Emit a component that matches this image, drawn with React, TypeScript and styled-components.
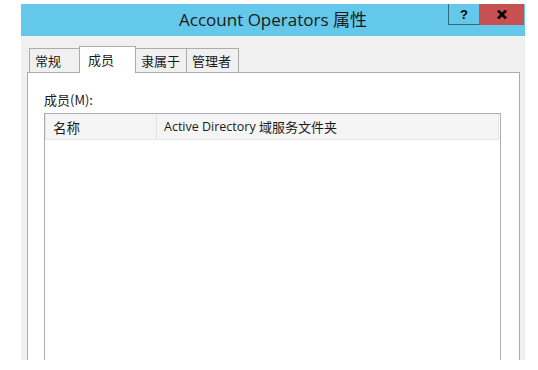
import React from "react";
import styled, { createGlobalStyle } from "styled-components";

const GlobalStyle = createGlobalStyle`
  html, body {
    margin: 0;
    padding: 0;
    background: #fff;
  }
  body {
    font-family: "Noto Sans", "Noto Sans CJK SC", sans-serif;
  }
`;

const Page = styled.div`
  width: 538px;
  height: 370px;
  padding: 4px 0 0 21px;
  box-sizing: border-box;
  overflow: hidden;
`;

const Window = styled.div`
  width: 504px;
  height: 356px;
  background: #f0f0f0;
  display: flex;
  flex-direction: column;
`;

const TitleBar = styled.div`
  position: relative;
  height: 32px;
  background: #63c8e9;
  display: flex;
  align-items: center;
  justify-content: center;
`;

const Title = styled.div`
  font-family: "Open Sans", "Noto Sans CJK SC", sans-serif;
  font-size: 17px;
  color: #1a1a1a;
  margin-top: -4px;
`;

const Controls = styled.div`
  position: absolute;
  top: 0;
  right: 1px;
  display: flex;
`;

const CtrlButton = styled.div<{ $close?: boolean }>`
  width: ${(p) => (p.$close ? 45 : 31)}px;
  height: 21px;
  box-sizing: border-box;
  display: flex;
  align-items: center;
  justify-content: center;
  background: ${(p) => (p.$close ? "#c75050" : "#63c8e9")};
  border-left: ${(p) => (p.$close ? "none" : "1px solid #2f6b80")};
  border-bottom: ${(p) => (p.$close ? "none" : "1px solid #2f6b80")};
  font-family: "Liberation Sans", sans-serif;
  font-weight: bold;
  font-size: 13px;
  color: #000;
`;

const CloseGlyph = styled.svg`
  width: 10px;
  height: 9px;
  stroke: #000;
  stroke-width: 2.6;
`;

const Body = styled.div`
  flex: 1;
  display: flex;
  flex-direction: column;
  padding: 10px 5px 0 6px;
  min-height: 0;
`;

const TabStrip = styled.div`
  display: flex;
  align-items: flex-end;
  padding-left: 2px;
  height: 27px;
  position: relative;
  z-index: 1;
  margin-bottom: -1px;
`;

const Tab = styled.div<{ $active?: boolean; $w: number }>`
  box-sizing: border-box;
  height: ${(p) => (p.$active ? 27 : 25)}px;
  width: ${(p) => p.$w}px;
  border: 1px solid #acacac;
  border-bottom: ${(p) => (p.$active ? "none" : "1px solid #acacac")};
  margin-left: -1px;
  background: ${(p) => (p.$active ? "#fff" : "#f0f0f0")};
  font-family: "Noto Sans CJK SC", sans-serif;
  font-size: 13px;
  color: #1a1a1a;
  display: flex;
  align-items: ${(p) => (p.$active ? "flex-start" : "center")};
  padding-top: ${(p) => (p.$active ? 3 : 0)}px;
  padding-left: ${(p) => (p.$active ? 8 : 5)}px;
  &:first-child {
    margin-left: 0;
  }
`;

const Panel = styled.div`
  flex: 1;
  background: #fff;
  border: 1px solid #acacac;
  border-bottom: none;
  padding: 18px 18px 0 16px;
  display: flex;
  flex-direction: column;
  min-height: 0;
`;

const Label = styled.div`
  font-family: "Noto Sans CJK SC", sans-serif;
  font-size: 13px;
  color: #1a1a1a;
  line-height: 17px;
  margin-bottom: 5px;
`;

const ListView = styled.div`
  flex: 1;
  border: 1px solid #abadb3;
  border-bottom: none;
  background: #fff;
`;

const HeaderRow = styled.div`
  display: flex;
  height: 25px;
  background: #f5f5f5;
  border: 1px solid #e6e6e6;
  border-top: none;
  margin-right: 1px;
`;

const HeaderCell = styled.div<{ $w?: number }>`
  box-sizing: border-box;
  ${(p) => (p.$w ? `width: ${p.$w}px;` : "flex: 1;")}
  padding-left: 7px;
  display: flex;
  align-items: center;
  font-family: "Open Sans", "Noto Sans CJK SC", sans-serif;
  font-size: 12.5px;
  color: #1a1a1a;
  border-right: 1px solid #e2e2e2;
  &:last-child {
    border-right: none;
  }
`;

const Cjk = styled.span<{ $size?: number }>`
  font-family: "Noto Sans CJK SC", sans-serif;
  font-size: ${(p) => p.$size ?? 13}px;
`;

export default function App() {
  return (
    <>
      <GlobalStyle />
      <Page>
        <Window>
          <TitleBar>
            <Title>
              Account Operators <Cjk $size={17}>属性</Cjk>
            </Title>
            <Controls>
              <CtrlButton>?</CtrlButton>
              <CtrlButton $close>
                <CloseGlyph viewBox="0 0 10 9">
                  <path d="M1 0.5 L9 8.5 M9 0.5 L1 8.5" />
                </CloseGlyph>
              </CtrlButton>
            </Controls>
          </TitleBar>
          <Body>
            <TabStrip>
              <Tab $w={51}>常规</Tab>
              <Tab $w={57} $active>
                成员
              </Tab>
              <Tab $w={52}>隶属于</Tab>
              <Tab $w={53}>管理者</Tab>
            </TabStrip>
            <Panel>
              <Label>成员(M):</Label>
              <ListView>
                <HeaderRow>
                  <HeaderCell $w={111}>
                    <Cjk $size={13.5}>名称</Cjk>
                  </HeaderCell>
                  <HeaderCell>
                    Active Directory&nbsp;<Cjk>域服务文件夹</Cjk>
                  </HeaderCell>
                </HeaderRow>
              </ListView>
            </Panel>
          </Body>
        </Window>
      </Page>
    </>
  );
}
